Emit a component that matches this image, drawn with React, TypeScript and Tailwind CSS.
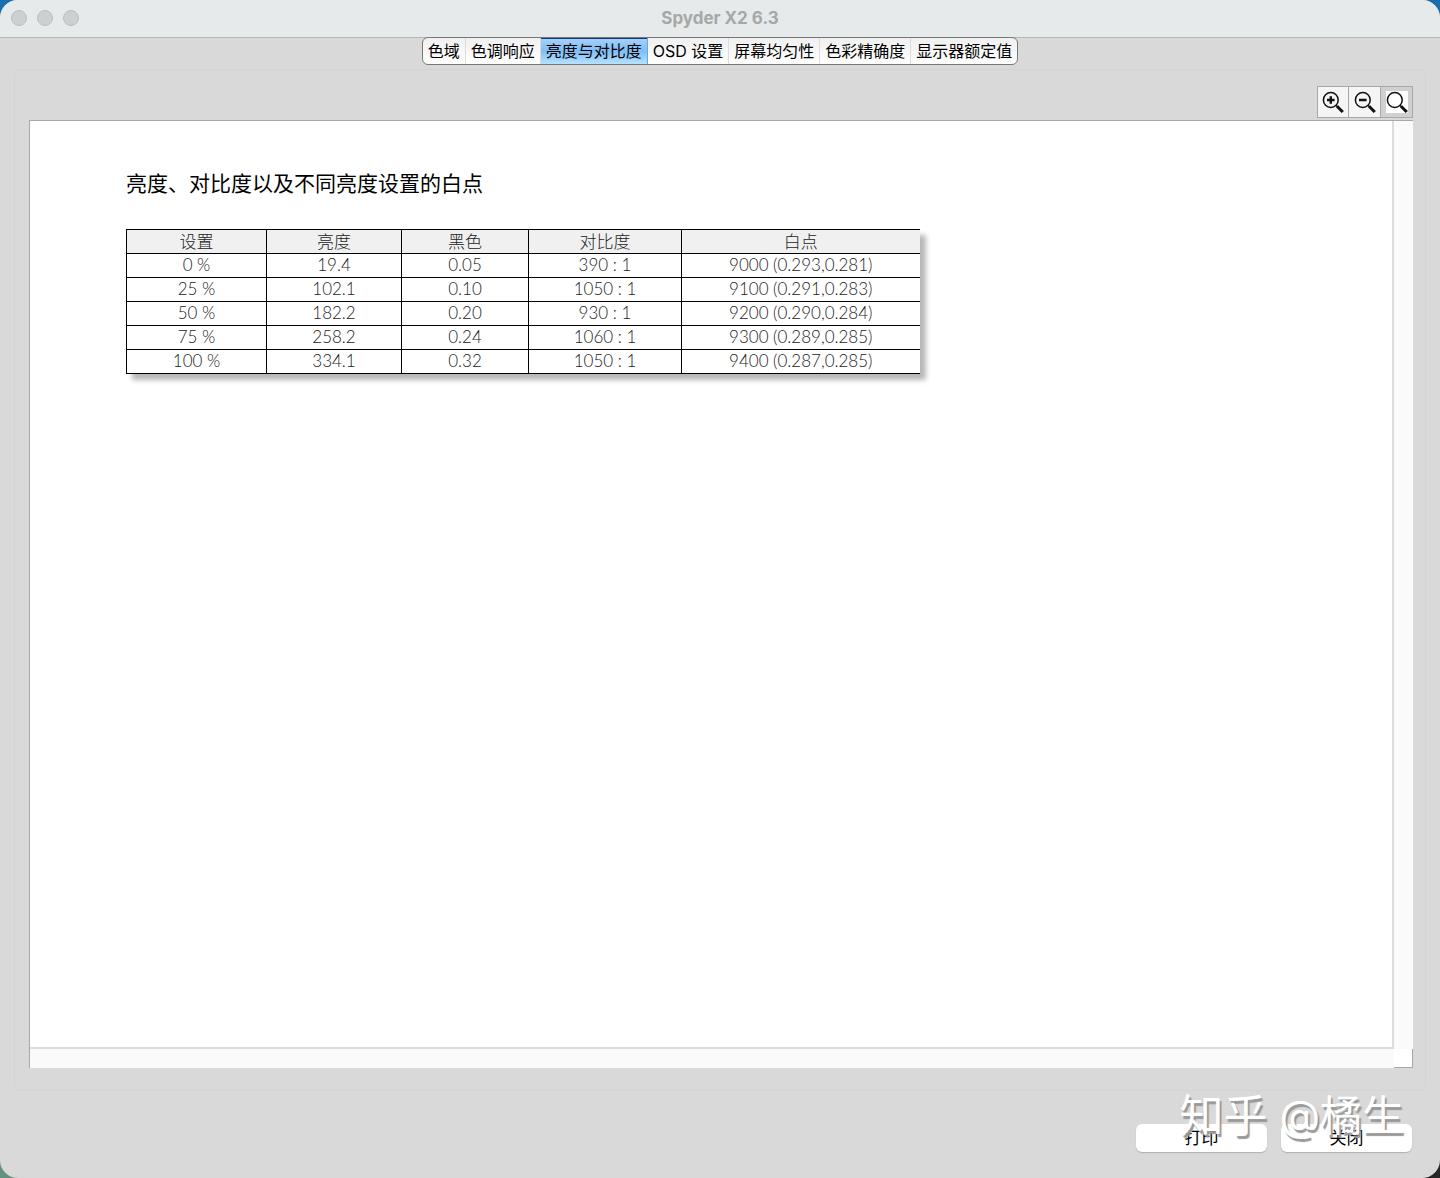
import { useState } from "react";
import clsx from "clsx";

const tabs = [
  "色域",
  "色调响应",
  "亮度与对比度",
  "OSD 设置",
  "屏幕均匀性",
  "色彩精确度",
  "显示器额定值",
];

const columns = [
  { label: "设置", width: "w-[140px]" },
  { label: "亮度", width: "w-[135px]" },
  { label: "黑色", width: "w-[127px]" },
  { label: "对比度", width: "w-[153px]" },
  { label: "白点", width: "w-[238px]" },
];

const rows = [
  ["0 %", "19.4", "0.05", "390 : 1", "9000 (0.293,0.281)"],
  ["25 %", "102.1", "0.10", "1050 : 1", "9100 (0.291,0.283)"],
  ["50 %", "182.2", "0.20", "930 : 1", "9200 (0.290,0.284)"],
  ["75 %", "258.2", "0.24", "1060 : 1", "9300 (0.289,0.285)"],
  ["100 %", "334.1", "0.32", "1050 : 1", "9400 (0.287,0.285)"],
];

const tools = [
  { id: "in", label: "放大" },
  { id: "out", label: "缩小" },
  { id: "reset", label: "实际大小" },
];

function Magnifier({ type }: { type: string }) {
  return (
    <svg width="22" height="22" viewBox="0 0 22 22" fill="none" stroke="#111">
      <circle cx="8.8" cy="9" r="7.4" strokeWidth="1.5" />
      <path d="M13.8 14l2 2" strokeWidth="1.6" />
      <path d="M15 15.2l5.8 5.8" strokeWidth="3" />
      {type !== "reset" && <path d="M5 9h7.6" strokeWidth="2.4" />}
      {type === "in" && <path d="M8.8 5.2v7.6" strokeWidth="2.4" />}
    </svg>
  );
}

function TitleBar() {
  return (
    <header className="grid h-[38px] grid-cols-3 items-center border-b border-[#b4b6b6] bg-[#e6eaea] px-[11px] pb-px">
      <div className="flex gap-[10px]">
        <button aria-label="关闭窗口" className="size-4 rounded-full border border-[#bbbebe] bg-[#cdd0d0]" />
        <button aria-label="最小化" className="size-4 rounded-full border border-[#bbbebe] bg-[#cdd0d0]" />
        <button aria-label="缩放" className="size-4 rounded-full border border-[#bbbebe] bg-[#cdd0d0]" />
      </div>
      <h1 className="text-center font-['Inter',sans-serif] text-[17px] leading-6 font-bold text-[#a5a8a8]">
        Spyder X2 6.3
      </h1>
    </header>
  );
}

function ResultTable() {
  return (
    <table className="table-fixed w-[793px] border-collapse border-y border-l border-black text-center font-['Lato','Noto_Sans_CJK_SC',sans-serif] text-[17px] leading-[22px] font-light text-[#222] shadow-[6px_6px_5px_#b8b8b8]">
      <thead>
        <tr className="h-6 bg-[#f0f0f0]">
          {columns.map((col) => (
            <th
              key={col.label}
              scope="col"
              className={clsx(col.width, "border-r border-b border-black p-0 font-light last:border-r-0")}
            >
              {col.label}
            </th>
          ))}
        </tr>
      </thead>
      <tbody>
        {rows.map((row) => (
          <tr key={row[0]} className="h-6 bg-white">
            {row.map((cell, i) => (
              <td key={i} className="border-r border-b border-black p-0 pb-px last:border-r-0">
                {cell}
              </td>
            ))}
          </tr>
        ))}
      </tbody>
    </table>
  );
}

export default function App() {
  const [active, setActive] = useState(2);
  const [tool, setTool] = useState("reset");

  return (
    <div className="bg-[linear-gradient(to_bottom,#1c6cb0_50%,transparent_50%),linear-gradient(to_right,#64917f_50%,#262626_50%)] font-['Inter','Noto_Sans_CJK_SC',sans-serif] text-black">
      <div className="flex min-h-screen flex-col overflow-hidden rounded-[18px] bg-[#d9d9d9]">
        <TitleBar />

        <nav role="tablist" className="-mt-px flex h-7 self-center overflow-hidden rounded-md border border-[#777] bg-linear-to-b from-[#f0f0f0] to-white">
          {tabs.map((tab, i) => (
            <button
              key={tab}
              role="tab"
              aria-selected={i === active}
              onClick={() => setActive(i)}
              className={clsx(
                "border-r px-[5px] text-[16px] leading-6 last:border-r-0",
                i === active
                  ? "border-[#6ba6e0] bg-linear-to-b from-[#a9d2f8] via-[#7fbdf6] to-[#b5e2ff] shadow-[inset_0_1px_0_#123a8c]"
                  : "border-[#dcdcdc]",
              )}
            >
              {tab}
            </button>
          ))}
        </nav>

        <main className="mx-[14px] mt-1 flex grow flex-col rounded-md border border-[#d3d3d3] pt-4 pr-3 pb-[22px] pl-[14px]">
          <div className="mb-[2px] flex justify-end">
            {tools.map((t) => (
              <button
                key={t.id}
                aria-label={t.label}
                onClick={() => setTool(t.id)}
                className={clsx(
                  "-ml-px flex h-8 w-[33px] items-center justify-center border border-[#a8a8a8] first:w-8",
                  t.id === tool ? "bg-[#d0d0d0]" : "bg-[#f5f5f5]",
                )}
              >
                <span className={clsx(t.id === tool && "bg-white")}>
                  <Magnifier type={t.id} />
                </span>
              </button>
            ))}
          </div>

          <div className="grid grow grid-cols-[1fr_19px] grid-rows-[1fr_19px] border-t border-l border-[#a8a8a8] bg-[#fafafa]">
            <section className="border-r-2 border-b-2 border-[#dcdcdc] bg-white px-24 pt-12">
              <h2 className="mb-[30px] text-[21px] leading-[30px] font-normal">
                亮度、对比度以及不同亮度设置的白点
              </h2>
              <ResultTable />
            </section>
            <div />
            <div />
            <div className="border-r border-b border-[#a8a8a8] bg-white" />
          </div>
        </main>

        <footer className="relative flex justify-end gap-[14px] pt-[33px] pr-7 pb-[26px]">
          <button className="h-7 w-[131px] rounded-md bg-white text-[17px] leading-6 shadow-[0_1px_1px_#b0b0b0]">
            打印
          </button>
          <button className="h-7 w-[131px] rounded-md bg-white text-[17px] leading-6 shadow-[0_1px_1px_#b0b0b0]">
            关闭
          </button>
          <p className="pointer-events-none absolute top-0 right-9 flex gap-3 text-[44px] leading-[50px] whitespace-nowrap text-white [text-shadow:2px_3px_1px_#999]">
            <span>知乎</span>
            <span className="text-[42px]">@橘生</span>
          </p>
        </footer>
      </div>
    </div>
  );
}
